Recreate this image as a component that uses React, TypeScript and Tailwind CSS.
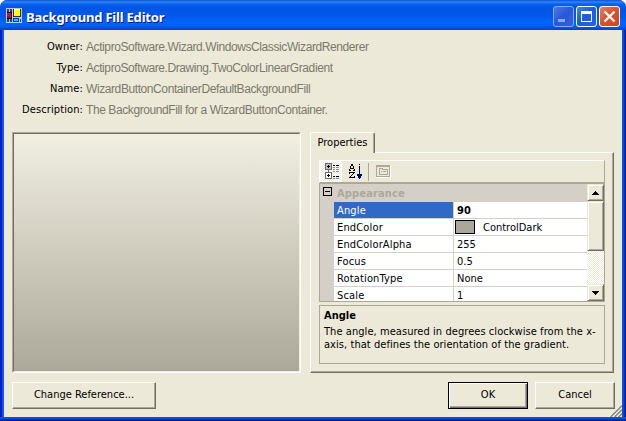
import React from "react";

const details = [
  { label: "Owner:", value: "ActiproSoftware.Wizard.WindowsClassicWizardRenderer" },
  { label: "Type:", value: "ActiproSoftware.Drawing.TwoColorLinearGradient" },
  { label: "Name:", value: "WizardButtonContainerDefaultBackgroundFill" },
  { label: "Description:", value: "The BackgroundFill for a WizardButtonContainer." },
];

const properties = [
  { name: "Angle", value: "90", selected: true },
  { name: "EndColor", value: "ControlDark", swatch: true },
  { name: "EndColorAlpha", value: "255" },
  { name: "Focus", value: "0.5" },
  { name: "RotationType", value: "None" },
  { name: "Scale", value: "1" },
];

const raised =
  "border border-t-white border-l-white border-r-[#716f64] border-b-[#716f64] shadow-[inset_-1px_-1px_0_#aca899]";

function AppIcon() {
  return (
    <svg width="16" height="15" viewBox="0 0 16 15" shapeRendering="crispEdges" className="shrink-0">
      <path fill="#c3c7cb" d="M0 0h16v15H0z" />
      <path fill="#0a3fc8" d="M1 1h2v3H1zM4 1h2v3H4zM1 11h2v3H1zM4 11h2v3H4zM14 11h1v3h-1z" />
      <path fill="#000" d="M1 4h5v7H1z" />
      <path fill="#e00048" d="M1 5h4v5H1z" />
      <path fill="#900030" d="M1 8h2v2H1z" />
      <path fill="#30302a" d="M7 1h8v8H7z" />
      <path fill="#ffff00" d="M8 1h6v7H8z" />
      <path fill="#ffffc0" d="M8 1h6v1H8zM8 2h1v5H8z" />
      <path fill="#0030c0" d="M7 10h6v4H7z" />
      <path fill="#00d8ff" d="M8 11h4v2H8z" />
    </svg>
  );
}

function TitleBar() {
  return (
    <header className="flex h-[30px] items-start rounded-t-[7px] bg-[linear-gradient(#0b4fd0_0px,#2f86fb_2px,#0a62ee_4px,#0055e5_8px,#0058ea_16px,#0066ff_23px,#0061f8_26px,#0048cf_29px,#0046c8_30px)] pl-1.5 pr-1.5">
      <div className="mt-2">
        <AppIcon />
      </div>
      <h1 className="ml-1 mt-[7px] h-5 font-['Noto_Sans',sans-serif] text-[13px] font-bold leading-5 tracking-[-0.2px] whitespace-nowrap text-white [text-shadow:1px_1px_0_#0a1883]">
        Background Fill Editor
      </h1>
      <div className="mt-1.5 ml-auto flex gap-0.5">
        <div className="size-[21px] rounded-[3px] border border-[#89a9f2] bg-[linear-gradient(135deg,#4f78e8,#2a56da_50%,#3563e0)]">
          <svg width="19" height="19" shapeRendering="crispEdges">
            <path fill="#8aa9f4" d="M4 12h7v3H4z" />
          </svg>
        </div>
        <div className="size-[21px] rounded-[3px] border border-white bg-[linear-gradient(135deg,#4a80f2,#1f5ae0_45%,#2264ea)]">
          <svg width="19" height="19" shapeRendering="crispEdges">
            <path fill="#fff" fillRule="evenodd" d="M4 4h11v11H4zM5 7v7h9V7z" />
          </svg>
        </div>
        <div className="size-[21px] rounded-[3px] border border-white bg-[linear-gradient(135deg,#e87f60,#e1502a_45%,#d2431c)]">
          <svg width="19" height="19" fill="none" stroke="#fff" strokeWidth="2.4">
            <path d="M4.5 4.5 14.5 14.5M14.5 4.5 4.5 14.5" />
          </svg>
        </div>
      </div>
    </header>
  );
}

function CategorizedIcon() {
  return (
    <svg width="16" height="17" shapeRendering="crispEdges">
      <path fill="#6c6c6c" d="M1 0h7v7H1z" />
      <path fill="#c0c0c0" d="M2 1h5v5H2z" />
      <path fill="#000" d="M3 3h3v1H3zM4 2h1v3H4z" />
      <path fill="#6c6c6c" d="M1 9h7v7H1zM4 7h1v2H4z" />
      <path fill="#fff" d="M2 10h5v5H2z" />
      <path fill="#000" d="M3 12h3v1H3zM4 11h1v3H4z" />
      <path fill="#000" d="M9 2h2v1H9zM12 2h3v1h-3zM9 13h2v1H9zM12 13h3v1h-3z" />
      <path
        fill="#8c8c8c"
        d="M9 4h2v1H9zM12 4h3v1h-3zM9 6h2v1H9zM12 6h3v1h-3zM9 8h2v1H9zM12 8h3v1h-3zM9 15h2v1H9zM12 15h3v1h-3z"
      />
    </svg>
  );
}

function SortIcon() {
  return (
    <svg width="14" height="16" shapeRendering="crispEdges">
      <path
        fill="#000"
        d="M2 0h2v2H2zM1 2h1v2H1zM4 2h1v2H4zM1 4h4v1H1zM0 5h1v2H0zM5 5h1v2H5zM0 6h2v1H0zM4 6h2v1H4zM0 8h6v1H0zM0 9h1v1H0zM4 9h1v1H4zM3 10h1v1H3zM2 11h1v1H2zM1 12h1v1H1zM5 12h1v1H5zM0 13h6v1H0z"
      />
      <path fill="#000" d="M10 0h1v1h-1zM10 2h1v3h-1z" />
      <path fill="#000080" d="M10 5h1v10h-1zM8 10h5v1H8zM8 11h5v1H8zM9 12h3v2H9z" />
    </svg>
  );
}

function PagesIcon() {
  return (
    <svg width="15" height="13" shapeRendering="crispEdges">
      <path fill="#fff" d="M1 1h14v12H1z" />
      <path fill="#aca899" d="M0 0h14v12H0z" />
      <path fill="#ece9d8" d="M1 2h12v9H1z" />
      <path fill="#aca899" fillRule="evenodd" d="M3 3h4v1h5v6H3zM4 4v5h7V5H6V4z" />
      <path fill="#aca899" d="M5 6h1v1H5zM7 6h3v1H7z" />
    </svg>
  );
}

function Arrow({ down = false }: { down?: boolean }) {
  return (
    <svg width="7" height="4" shapeRendering="crispEdges">
      <path
        fill="#000"
        d={down ? "M0 0h7v1H0zM1 1h5v1H1zM2 2h3v1H2zM3 3h1v1H3z" : "M3 0h1v1H3zM2 1h3v1H2zM1 2h5v1H1zM0 3h7v1H0z"}
      />
    </svg>
  );
}

function ScrollBar() {
  const bevel =
    "shrink-0 border border-t-[#ece9d8] border-l-[#ece9d8] border-r-[#716f64] border-b-[#716f64] bg-[#ece9d8] shadow-[inset_1px_1px_0_#fff,inset_-1px_-1px_0_#aca899]";
  return (
    <div className="flex w-[17px] shrink-0 flex-col bg-[repeating-conic-gradient(#ffffff_0_25%,#ece9d8_0_50%)] bg-[length:2px_2px]">
      <div className={`flex h-[17px] items-center justify-center ${bevel}`}>
        <Arrow />
      </div>
      <div className={`h-[50px] ${bevel}`} />
      <div className={`mt-auto flex h-[17px] items-center justify-center ${bevel}`}>
        <Arrow down />
      </div>
    </div>
  );
}

function PropertyGrid() {
  return (
    <div className="flex h-[119px] border border-[#aca899] bg-[#d4d0c8]">
      <div className="flex w-[14px] shrink-0 justify-center pt-[3px]">
        <svg width="9" height="9" shapeRendering="crispEdges">
          <path fill="#000" fillRule="evenodd" d="M0 0h9v9H0zM1 1v7h7V1zM2 4h5v1H2z" />
        </svg>
      </div>
      <div className="min-w-0 flex-1 overflow-hidden">
        <div className="h-[18px] pl-[3px] font-bold leading-[19px] tracking-[0.15px] text-[#aca899]">Appearance</div>
        {properties.map((p) => (
          <div key={p.name} className="flex h-[17px] leading-[17px]">
            <div
              className={
                p.selected
                  ? "h-4 w-[119px] bg-[#316ac5] pl-[3px] tracking-[0.15px] text-white"
                  : "h-4 w-[119px] bg-white pl-[3px] tracking-[0.15px]"
              }
            >
              {p.name}
            </div>
            <div className="ml-px flex h-4 flex-1 bg-white">
              {p.swatch && <span className="mt-px mr-[5px] ml-px h-[14px] w-5 border border-black bg-[#aca899]" />}
              <span className={p.selected ? "pl-[3px] font-bold" : "pl-[3px]"}>{p.value}</span>
            </div>
          </div>
        ))}
      </div>
      <ScrollBar />
    </div>
  );
}

function PropertiesPanel() {
  return (
    <div className="flex w-[304px] flex-col">
      <div className="z-10 -mb-px flex h-[21px] w-[65px] justify-center rounded-t-[2px] border border-b-0 border-t-white border-l-white border-r-[#716f64] bg-[#ece9d8] leading-[19px] shadow-[inset_-1px_0_0_#aca899]">
        Properties
      </div>
      <div className={`flex h-[221px] flex-col px-2 pt-[7px] ${raised}`}>
        <div className="flex h-[23px] items-center border border-b-[#aca899] border-t-white border-l-white border-r-[#aca899]">
          <div className="flex h-[21px] w-[22px] items-center border border-white bg-[repeating-conic-gradient(#ffffff_0_25%,#ece9d8_0_50%)] bg-[length:2px_2px] pl-[3px]">
            <CategorizedIcon />
          </div>
          <div className="ml-[7px]">
            <SortIcon />
          </div>
          <div className="mr-[7px] ml-[5px] h-[18px] w-px bg-[#aca899]" />
          <PagesIcon />
        </div>
        <PropertyGrid />
        <div className="mt-[3px] h-[59px] border border-[#aca899] px-1 pt-[3px] leading-[13px]">
          <div className="font-bold">Angle</div>
          <p className="mt-[3px] tracking-[0.06px] whitespace-nowrap">
            The angle, measured in degrees clockwise from the x-
            <br />
            axis, that defines the orientation of the gradient.
          </p>
        </div>
      </div>
    </div>
  );
}

export default function App() {
  return (
    <div className="h-[421px] w-[626px] bg-white">
      <div className="flex h-full flex-col overflow-hidden rounded-t-[7px] bg-[#0046e8] font-['DejaVu_Sans_Condensed','DejaVu_Sans',sans-serif] text-[11px] text-black">
        <TitleBar />
        <div className="flex flex-1 flex-col bg-[linear-gradient(#0855dd_1px,#0441d8_2px,#001ea0_3px,#00138c_4px)] bg-[length:100%_4px] bg-bottom bg-no-repeat">
          <div className="flex flex-1">
            <div className="w-1 bg-[linear-gradient(90deg,#0019cf_1px,#0831d9_2px,#166aee_3px,#0855dd_4px)]" />
            <main className="relative flex h-[387px] flex-1 flex-col bg-[#ece9d8] px-2">
              <dl className="flex h-[102px] flex-col pt-[6px]">
                {details.map((d) => (
                  <div key={d.label} className="flex h-[21px] items-center">
                    <dt className="w-[71px] pt-px text-right tracking-[0.1px] whitespace-nowrap">{d.label}</dt>
                    <dd className="ml-[3px] font-['Liberation_Sans',Arial,sans-serif] text-[12px] tracking-[-0.41px] whitespace-nowrap text-[#7b796c]">
                      {d.value}
                    </dd>
                  </div>
                ))}
              </dl>
              <div className="flex gap-[9px]">
                <div className="h-[241px] w-[289px] border border-t-[#aca899] border-l-[#aca899] border-r-white border-b-white">
                  <div className="size-full border border-t-[#716f64] border-l-[#716f64] border-r-[#f1efe2] border-b-[#f1efe2] bg-[linear-gradient(#f1efe2,#aca899)]" />
                </div>
                <PropertiesPanel />
              </div>
              <div className="mt-[9px] flex">
                <button className={`h-[27px] w-[144px] ${raised}`}>Change Reference...</button>
                <button className="ml-auto h-[27px] w-20 border border-black shadow-[inset_1px_1px_0_#fff,inset_-1px_-1px_0_#716f64,inset_-2px_-2px_0_#aca899]">
                  OK
                </button>
                <button className={`-mr-px ml-[7px] h-[27px] w-20 ${raised}`}>Cancel</button>
              </div>
              <svg width="13" height="13" className="absolute right-0 bottom-0" fill="none">
                <path stroke="#fff" d="M0 13 13 0M4 13 13 4M8 13 13 8" />
                <path stroke="#8f8c7e" strokeWidth="1.7" d="M1.5 13 13 1.5M5.5 13 13 5.5M9.5 13 13 9.5" />
              </svg>
            </main>
            <div className="w-1 bg-[linear-gradient(90deg,#0855dd_1px,#0441d8_2px,#001ea0_3px,#00138c_4px)]" />
          </div>
          <div className="h-1" />
        </div>
      </div>
    </div>
  );
}
